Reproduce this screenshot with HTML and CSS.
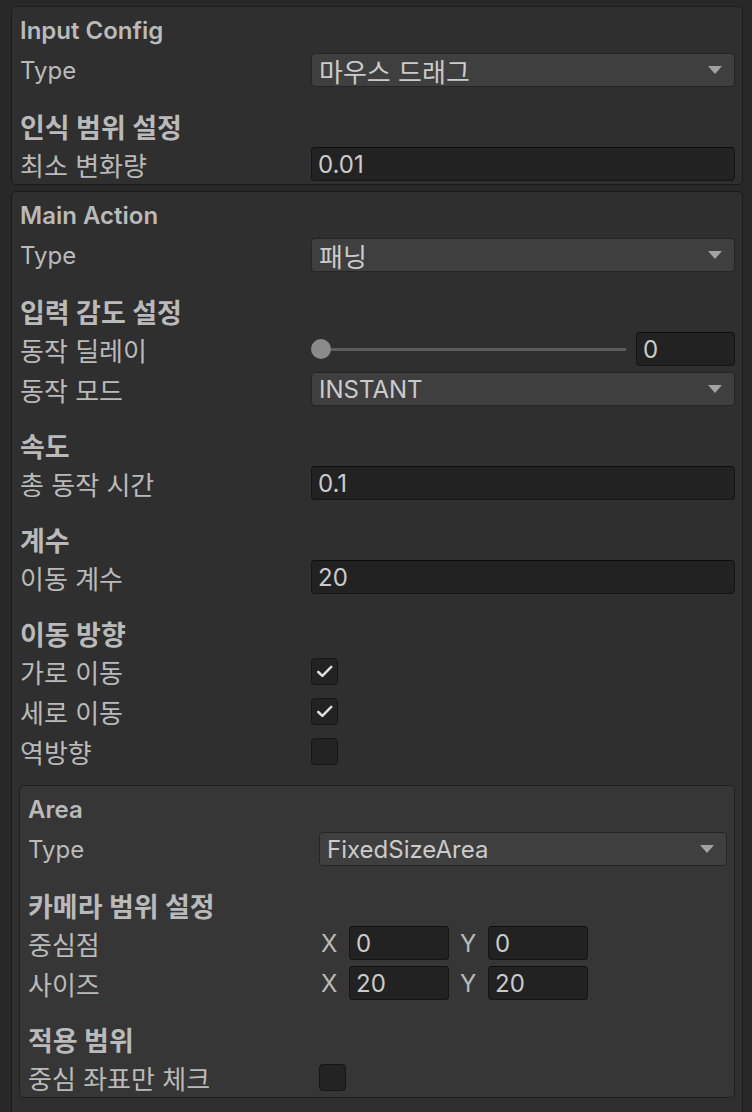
FILE: index.html
```html
<!DOCTYPE html>
<html lang="ko">
  <head>
    <meta charset="UTF-8" />
    <meta name="viewport" content="width=device-width, initial-scale=1.0" />
    <title>Inspector</title>
    <link rel="stylesheet" href="styles.css">
  </head>
  <body>
    <div class="inspector">
      <section class="box">
        <div class="title">Input Config</div>
        <div class="row">
          <span class="label">Type</span>
          <div class="dropdown"><span class="ko">마우스 드래그</span><i class="arrow"></i></div>
        </div>
        <div class="header ko">인식 범위 설정</div>
        <div class="row">
          <span class="label ko">최소 변화량</span>
          <div class="field">0.01</div>
        </div>
      </section>

      <section class="box main">
        <div class="title">Main Action</div>
        <div class="row">
          <span class="label">Type</span>
          <div class="dropdown"><span class="ko">패닝</span><i class="arrow"></i></div>
        </div>

        <div class="header ko">입력 감도 설정</div>
        <div class="row">
          <span class="label ko">동작 딜레이</span>
          <div class="slider">
            <span class="knob"></span>
            <span class="track"></span>
            <div class="field num">0</div>
          </div>
        </div>
        <div class="row">
          <span class="label ko">동작 모드</span>
          <div class="dropdown">INSTANT<i class="arrow"></i></div>
        </div>

        <div class="header ko">속도</div>
        <div class="row">
          <span class="label ko">총 동작 시간</span>
          <div class="field">0.1</div>
        </div>

        <div class="header ko">계수</div>
        <div class="row">
          <span class="label ko">이동 계수</span>
          <div class="field">20</div>
        </div>

        <div class="header ko">이동 방향</div>
        <div class="row">
          <span class="label ko">가로 이동</span>
          <span class="checkbox"><svg viewBox="0 0 26 26"><path d="M6.5 13.5 L10.8 17.6 L20 8.2" /></svg></span>
        </div>
        <div class="row">
          <span class="label ko">세로 이동</span>
          <span class="checkbox"><svg viewBox="0 0 26 26"><path d="M6.5 13.5 L10.8 17.6 L20 8.2" /></svg></span>
        </div>
        <div class="row">
          <span class="label ko">역방향</span>
          <span class="checkbox"></span>
        </div>

        <section class="box area">
          <div class="title">Area</div>
          <div class="row">
            <span class="label">Type</span>
            <div class="dropdown">FixedSizeArea<i class="arrow"></i></div>
          </div>

          <div class="header ko">카메라 범위 설정</div>
          <div class="row">
            <span class="label ko">중심점</span>
            <div class="vec">
              <span class="axis">X</span><div class="field">0</div>
              <span class="axis">Y</span><div class="field">0</div>
            </div>
          </div>
          <div class="row">
            <span class="label ko">사이즈</span>
            <div class="vec">
              <span class="axis">X</span><div class="field">20</div>
              <span class="axis">Y</span><div class="field">20</div>
            </div>
          </div>

          <div class="header ko">적용 범위</div>
          <div class="row">
            <span class="label ko">중심 좌표만 체크</span>
            <span class="checkbox"></span>
          </div>
        </section>
      </section>
    </div>
  </body>
</html>
```

FILE: styles.css
```css
:root {
  --page-bg: #282828;
  --box-bg: #2f2f2f;
  --area-bg: #363636;
  --border: #1b1b1b;
  --text: #bababa;
  --value-text: #cbcbcb;
  --dropdown-bg: #3f3f3f;
  --field-bg: #222222;
}

body {
  margin: 0;
  background-color: var(--page-bg);
  font-family: Inter, "Noto Sans CJK KR", sans-serif;
  font-size: 24px;
  color: var(--text);
}

/* hangul from the fallback font is drawn larger than the latin text */
.ko {
  font-size: 26px;
}

.inspector {
  padding: 6px 9px 0 11px;
}

.box {
  background-color: var(--box-bg);
  border: 1px solid var(--border);
  border-radius: 5px;
  padding: 3px 7px 0 7px;
  margin-bottom: 6px;
}

.main {
  padding-bottom: 30px;
}

.area {
  margin: 14px 0 0;
  background-color: var(--area-bg);
  border-color: #202020;
  padding-bottom: 0;
}

.title {
  height: 40px;
  display: flex;
  align-items: center;
  font-weight: 600;
  padding-left: 1px;
}

.header {
  height: 36px;
  margin-top: 18px;
  display: flex;
  align-items: center;
  font-weight: 700;
  padding-left: 1px;
}

.header.ko {
  font-size: 27px;
}

.row {
  display: grid;
  grid-template-columns: 292px 1fr;
  align-items: center;
  height: 40px;
}

.label {
  padding-left: 1px;
  white-space: nowrap;
}

/* controls */
.dropdown,
.field {
  box-sizing: border-box;
  height: 34px;
  display: flex;
  align-items: center;
  border-radius: 4px;
  color: var(--value-text);
  white-space: nowrap;
}

.dropdown {
  justify-content: space-between;
  padding: 0 12px 0 7px;
  background-color: var(--dropdown-bg);
  border: 1px solid #252525;
}

.arrow {
  width: 0;
  height: 0;
  border-left: 7px solid transparent;
  border-right: 7px solid transparent;
  border-top: 8px solid #a2a2a2;
}

.field {
  padding: 0 6px;
  background-color: var(--field-bg);
  border: 1px solid #151515;
  border-top-color: #0d0d0d;
}

.slider {
  display: flex;
  align-items: center;
}

.knob {
  width: 20px;
  height: 20px;
  border-radius: 50%;
  background-color: #8a8a8a;
}

.track {
  flex: 1;
  height: 3px;
  background-color: #5c5c5c;
  margin-right: 10px;
}

.field.num {
  width: 99px;
}

.checkbox {
  box-sizing: border-box;
  width: 27px;
  height: 27px;
  border-radius: 4px;
  background-color: #232323;
  border: 1px solid #161616;
}

.checkbox svg {
  display: block;
  width: 25px;
  height: 25px;
  fill: none;
  stroke: #dedede;
  stroke-width: 2.6;
  stroke-linecap: round;
  stroke-linejoin: round;
}

.vec {
  display: flex;
  align-items: center;
}

.axis {
  width: 30px;
  padding-left: 2px;
  box-sizing: border-box;
}

.vec .field {
  width: 100px;
  margin-right: 9px;
}
```
